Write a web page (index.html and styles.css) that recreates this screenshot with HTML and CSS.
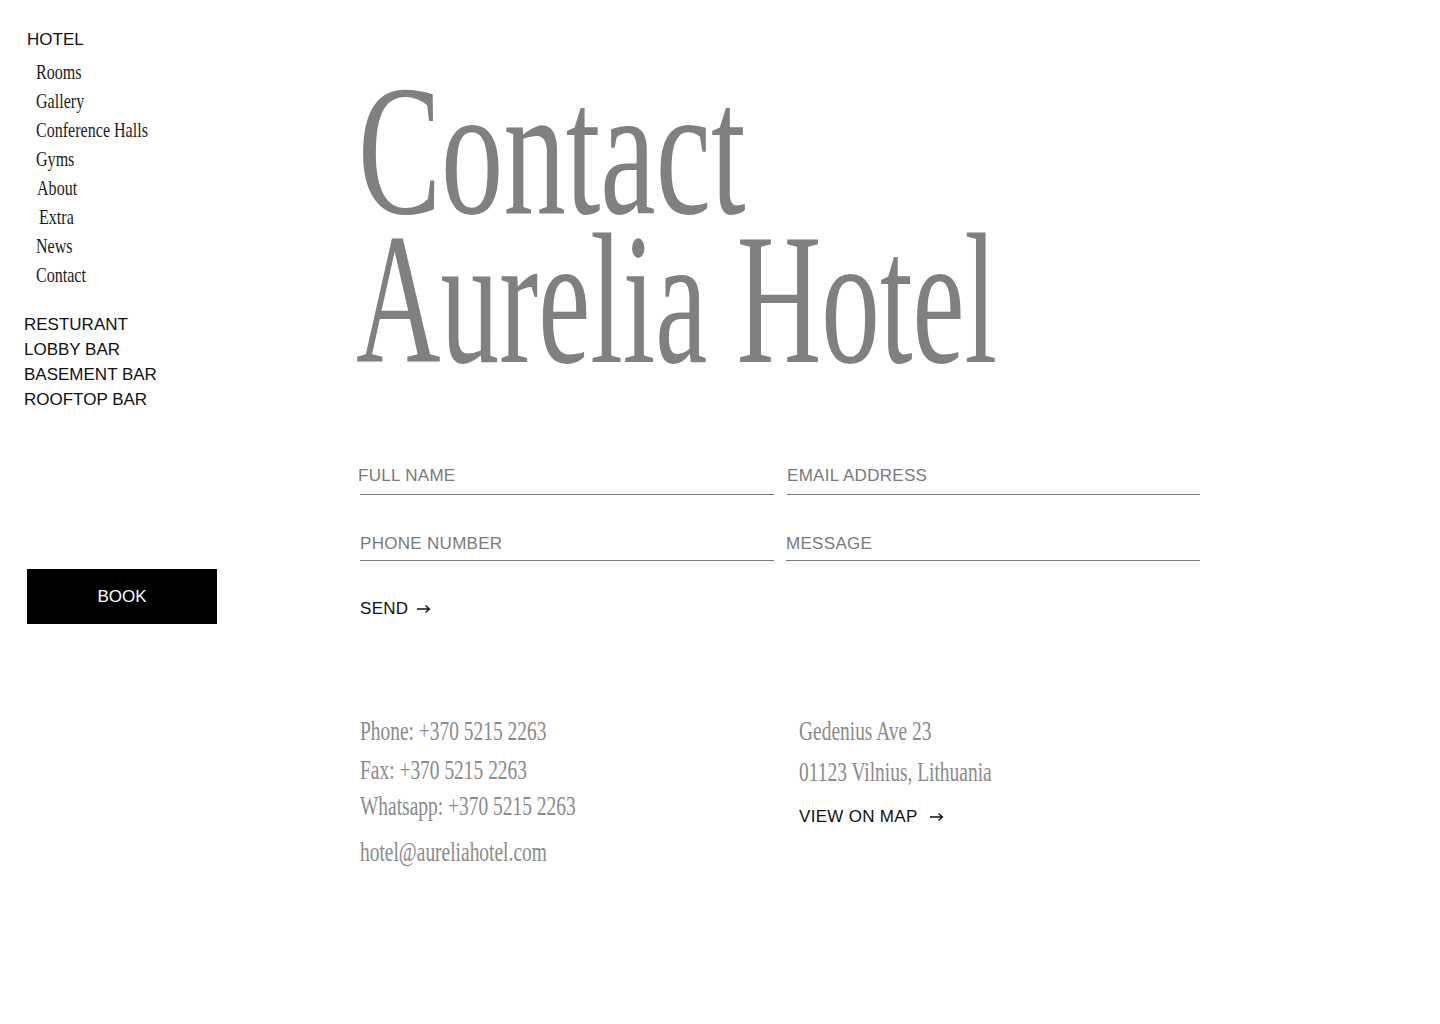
FILE: index.html
```html
<!DOCTYPE html>
<html lang="en">
<head>
<meta charset="utf-8">
<title>Contact – Aurelia Hotel</title>
<link rel="stylesheet" href="styles.css">
</head>
<body>
<div class="page">
  <aside class="sidebar">
    <nav class="nav">
      <div class="nav-head">HOTEL</div>
      <ul class="sub">
        <li><span class="cond">Rooms</span></li>
        <li><span class="cond">Gallery</span></li>
        <li><span class="cond">Conference Halls</span></li>
        <li><span class="cond">Gyms</span></li>
        <li class="nudge1"><span class="cond">About</span></li>
        <li class="nudge3"><span class="cond">Extra</span></li>
        <li><span class="cond">News</span></li>
        <li><span class="cond">Contact</span></li>
      </ul>
      <ul class="sections">
        <li>RESTURANT</li>
        <li>LOBBY BAR</li>
        <li>BASEMENT BAR</li>
        <li>ROOFTOP BAR</li>
      </ul>
    </nav>
    <a class="book" href="#">BOOK</a>
  </aside>

  <main class="main">
    <h1 class="hero">
      <span class="hero-line first"><span class="hero-text">Contact</span></span>
      <span class="hero-line second"><span class="hero-text">Aurelia Hotel</span></span>
    </h1>

    <form class="form">
      <div class="row row-1">
        <label class="field"><span>FULL NAME</span></label>
        <label class="field"><span>EMAIL ADDRESS</span></label>
      </div>
      <div class="row row-2">
        <label class="field"><span>PHONE NUMBER</span></label>
        <label class="field"><span>MESSAGE</span></label>
      </div>
      <button type="button" class="link send">SEND
        <svg class="arrow" width="15" height="10" viewBox="0 0 15 10"><path d="M1 5H13.5M9.5 1.5L13.5 5L9.5 8.5" fill="none" stroke="#111" stroke-width="1.3"/></svg>
      </button>
    </form>

    <section class="info">
      <div class="col left">
        <div class="line l1"><span class="cond">Phone: +370 5215 2263</span></div>
        <div class="line l2"><span class="cond">Fax: +370 5215 2263</span></div>
        <div class="line l3"><span class="cond">Whatsapp: +370 5215 2263</span></div>
        <div class="line l4"><span class="cond">hotel@aureliahotel.com</span></div>
      </div>
      <div class="col right">
        <div class="line r1"><span class="cond">Gedenius Ave 23</span></div>
        <div class="line r2"><span class="cond">01123 Vilnius, Lithuania</span></div>
        <a class="link map" href="#">VIEW ON MAP
          <svg class="arrow" width="15" height="10" viewBox="0 0 15 10"><path d="M1 5H13.5M9.5 1.5L13.5 5L9.5 8.5" fill="none" stroke="#111" stroke-width="1.3"/></svg>
        </a>
      </div>
    </section>
  </main>
</div>
</body>
</html>
```

FILE: styles.css
```css
* { box-sizing: border-box; }

html, body {
  margin: 0;
  padding: 0;
  background: #fff;
}

body {
  font-family: "Liberation Sans", Arial, sans-serif;
  color: #111;
  width: 1440px;
  height: 1024px;
  overflow: hidden;
}

.page {
  display: flex;
}

ul {
  list-style: none;
  margin: 0;
  padding: 0;
}

.cond {
  display: inline-block;
  white-space: nowrap;
  transform: scaleX(0.72);
  transform-origin: 0 50%;
}

/* Sidebar */
.sidebar {
  width: 356px;
  flex: none;
  padding: 30px 0 0 24px;
  display: flex;
  flex-direction: column;
}

.nav-head {
  font-size: 17px;
  line-height: 20px;
  padding-left: 3px;
  color: #111;
}

.sub {
  margin-top: 7px;
  padding-left: 12px;
  font-family: "Liberation Serif", "Times New Roman", serif;
  font-size: 22px;
  line-height: 29px;
  color: #1c1c1c;
}

.sub .cond {
  transform: scaleX(0.73);
}

.sub li.nudge1 { padding-left: 1px; }
.sub li.nudge3 { padding-left: 3px; }

.sections {
  margin-top: 23px;
  font-size: 17px;
  line-height: 25px;
  color: #111;
}

.book {
  margin-top: 157px;
  margin-left: 3px;
  width: 190px;
  height: 55px;
  background: #000;
  color: #fff;
  font-size: 17px;
  text-decoration: none;
  display: flex;
  align-items: center;
  justify-content: center;
}

/* Main */
.main {
  flex: 1;
  padding-top: 76px;
}

.hero {
  margin: 0;
  font-family: "Liberation Serif", "Times New Roman", serif;
  font-weight: normal;
  font-size: 186px;
  line-height: 149px;
  color: #808080;
}

.hero-line {
  display: block;
  height: 149px;
}

.hero-line.first {
  padding-left: 2px;
}

.hero-text {
  display: inline-block;
  white-space: nowrap;
  transform: scaleX(0.67);
  transform-origin: 0 50%;
}

.hero-line.second .hero-text {
  transform: scaleX(0.63);
}

/* Form */
.form {
  margin-top: 92px;
  width: 845px;
  padding-left: 4px;
}

.row {
  display: grid;
  grid-template-columns: 414px 414px;
  column-gap: 12px;
}

.row-2 {
  margin-top: 39px;
}

.field {
  display: block;
  font-size: 17px;
  line-height: 20px;
  letter-spacing: 0.3px;
  color: #7a7a7a;
  border-bottom: 1px solid #7a7a7a;
  padding-bottom: 8px;
}

.row-2 .field {
  padding-bottom: 6px;
}

.row-1 .field:first-child span {
  margin-left: -2px;
}

.row-1 .field:last-child {
  margin-left: 1px;
}

.link {
  display: inline-flex;
  align-items: center;
  gap: 8px;
  font-family: "Liberation Sans", Arial, sans-serif;
  font-size: 17px;
  line-height: 20px;
  color: #111;
  text-decoration: none;
  background: none;
  border: 0;
  padding: 0;
  cursor: pointer;
  letter-spacing: 0.3px;
}

.send {
  margin-top: 38px;
}

.arrow {
  display: block;
  flex: none;
}

/* Info */
.info {
  margin-top: 93px;
  padding-left: 4px;
  display: grid;
  grid-template-columns: 439px 400px;
  font-family: "Liberation Serif", "Times New Roman", serif;
  font-size: 27px;
  color: #8a8a8a;
}

.line {
  line-height: 38px;
  white-space: nowrap;
}

.l1 { line-height: 38px; }
.l2 { line-height: 37px; margin-top: 2px; }
.l3 { line-height: 34px; }
.l4 { line-height: 38px; margin-top: 10px; }

.r1 { line-height: 39px; }
.r2 { line-height: 42px; }

.map {
  margin-top: 14px;
  gap: 11px;
}
```
